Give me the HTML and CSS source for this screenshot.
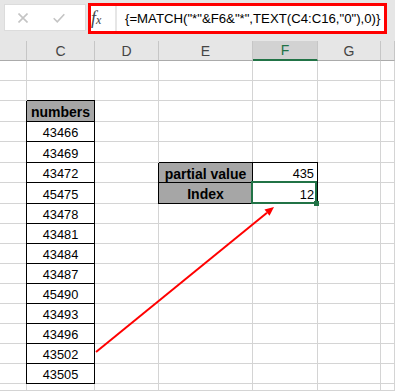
FILE: index.html
```html
<!DOCTYPE html>
<html lang="en">

<head>
  <meta charset="UTF-8">
  <meta name="viewport" content="width=device-width, initial-scale=1.0">
  <title>MATCH partial value</title>
  <link rel="stylesheet" href="styles.css">
</head>

<body>
  <div class="topbar">
    <div class="edit-btns">
      <svg class="ico" width="10" height="10" viewBox="0 0 10 10"><path d="M0.5 0.5 9.5 9.5M9.5 0.5 0.5 9.5" /></svg>
      <svg class="ico" width="12" height="10" viewBox="0 0 12 10"><path d="M0.7 5.2 4.3 8.8 11.3 1.2" /></svg>
    </div>
    <div class="formula-wrap">
      <div class="fx"><i>f</i><small>x</small></div>
      <div class="formula">{=MATCH("*"&amp;F6&amp;"*",TEXT(C4:C16,"0"),0)}</div>
    </div>
  </div>

  <div class="sheet">
    <div class="grid">
      <div class="c hd"></div><div class="c hd">C</div><div class="c hd">D</div><div class="c hd">E</div><div class="c hd sel">F</div><div class="c hd">G</div><div class="c hd"></div>

      <div class="c"></div><div class="c"></div><div class="c"></div><div class="c"></div><div class="c"></div><div class="c"></div><div class="c"></div>
      <div class="c"></div><div class="c"></div><div class="c"></div><div class="c"></div><div class="c"></div><div class="c"></div><div class="c"></div>
      <div class="c"></div><div class="c box lbl">numbers</div><div class="c"></div><div class="c"></div><div class="c"></div><div class="c"></div><div class="c"></div>
      <div class="c"></div><div class="c box">43466</div><div class="c"></div><div class="c"></div><div class="c"></div><div class="c"></div><div class="c"></div>
      <div class="c"></div><div class="c box">43469</div><div class="c"></div><div class="c"></div><div class="c"></div><div class="c"></div><div class="c"></div>
      <div class="c"></div><div class="c box">43472</div><div class="c"></div><div class="c box lbl">partial value</div><div class="c box val">435</div><div class="c"></div><div class="c"></div>
      <div class="c"></div><div class="c box">45475</div><div class="c"></div><div class="c box lbl">Index</div><div class="c box val cur">12</div><div class="c"></div><div class="c"></div>
      <div class="c"></div><div class="c box">43478</div><div class="c"></div><div class="c"></div><div class="c"></div><div class="c"></div><div class="c"></div>
      <div class="c"></div><div class="c box">43481</div><div class="c"></div><div class="c"></div><div class="c"></div><div class="c"></div><div class="c"></div>
      <div class="c"></div><div class="c box">43484</div><div class="c"></div><div class="c"></div><div class="c"></div><div class="c"></div><div class="c"></div>
      <div class="c"></div><div class="c box">43487</div><div class="c"></div><div class="c"></div><div class="c"></div><div class="c"></div><div class="c"></div>
      <div class="c"></div><div class="c box">45490</div><div class="c"></div><div class="c"></div><div class="c"></div><div class="c"></div><div class="c"></div>
      <div class="c"></div><div class="c box">43493</div><div class="c"></div><div class="c"></div><div class="c"></div><div class="c"></div><div class="c"></div>
      <div class="c"></div><div class="c box">43496</div><div class="c"></div><div class="c"></div><div class="c"></div><div class="c"></div><div class="c"></div>
      <div class="c"></div><div class="c box">43502</div><div class="c"></div><div class="c"></div><div class="c"></div><div class="c"></div><div class="c"></div>
      <div class="c"></div><div class="c box">43505</div><div class="c"></div><div class="c"></div><div class="c"></div><div class="c"></div><div class="c"></div>
      <div class="c"></div><div class="c"></div><div class="c"></div><div class="c"></div><div class="c"></div><div class="c"></div><div class="c"></div>
    </div>

    <!-- annotation arrow from 43502 to the result cell -->
    <svg class="arrow" width="395" height="350" viewBox="0 0 395 350">
      <line x1="96" y1="311" x2="267" y2="171.7" />
      <polygon points="274,166 269.5,174.8 264.5,168.6" />
    </svg>
  </div>
</body>

</html>
```

FILE: styles.css
```css
body {
  margin: 0;
  width: 395px;
  height: 391px;
  overflow: hidden;
  background: #fff;
  font-family: "Liberation Sans", Arial, sans-serif;
  color: #000;
}

.topbar {
  display: flex;
  align-items: flex-start;
  height: 41px;
  background: #e6e6e6;
}

.edit-btns {
  display: flex;
  align-items: center;
  gap: 25px;
  box-sizing: border-box;
  width: 82px;
  height: 27px;
  margin: 4px 0 0 4px;
  padding-left: 13px;
  background: #fff;
  border: 1px solid #dcdcdc;
}

.edit-btns .ico {
  fill: none;
  stroke: #c4c4c4;
  stroke-width: 1.6;
}

.formula-wrap {
  display: flex;
  box-sizing: border-box;
  width: 299px;
  height: 31px;
  margin: 3px 0 0 2px;
  border: 3px solid #f00;
  background: #e6e6e6;
}

.fx {
  width: 24px;
  background: #fff;
  font-family: "Liberation Serif", "Times New Roman", serif;
  color: #444;
  line-height: 25px;
}

.fx i {
  font-size: 18px;
}

.fx small {
  font-style: italic;
  font-size: 12px;
}

.formula {
  flex: 1;
  margin-left: 2px;
  padding-left: 8px;
  background: #fff;
  font-size: 13.2px;
  line-height: 25px;
  white-space: nowrap;
  overflow: hidden;
}

.sheet {
  position: relative;
}

.grid {
  display: grid;
  grid-template-columns: 27px 68px 64px 94px 65px 63px 1fr;
  grid-template-rows: 20px 20px 20px 21px 20px 21px 20px 21px repeat(9, 20px) 1fr;
  height: 350px;
}

.c {
  display: flex;
  align-items: center;
  justify-content: center;
  box-sizing: border-box;
  min-width: 0;
  padding-top: 2px;
  background: #fff;
  border-right: 1px solid #d4d4d4;
  border-bottom: 1px solid #d4d4d4;
  font-size: 12.8px;
  white-space: nowrap;
}

.c.hd {
  padding-top: 0;
  background: #e6e6e6;
  border-right-color: #c6c6c6;
  border-bottom-color: #ababab;
  color: #444;
  font-size: 14px;
}

.c.hd.sel {
  background: #d2d2d2;
  color: #217346;
  border-bottom: 2px solid #217346;
}

.c.box {
  border-right-color: #000;
  border-bottom-color: #000;
  box-shadow: -1px 0 #000, 0 -1px #000;
}

.c.lbl {
  background: #a6a6a6;
  font-weight: bold;
  font-size: 14px;
}

.c.val {
  justify-content: flex-end;
  padding-right: 3px;
}

.c.cur {
  position: relative;
}

.c.cur::before {
  content: "";
  position: absolute;
  top: -2px;
  left: -2px;
  right: 0;
  bottom: -1px;
  border: 2px solid #217346;
}

.c.cur::after {
  content: "";
  position: absolute;
  right: -2px;
  bottom: -3px;
  width: 5px;
  height: 5px;
  background: #217346;
}

.arrow {
  position: absolute;
  top: 0;
  left: 0;
  pointer-events: none;
}

.arrow line {
  stroke: #f00;
  stroke-width: 2;
}

.arrow polygon {
  fill: #f00;
}
```
